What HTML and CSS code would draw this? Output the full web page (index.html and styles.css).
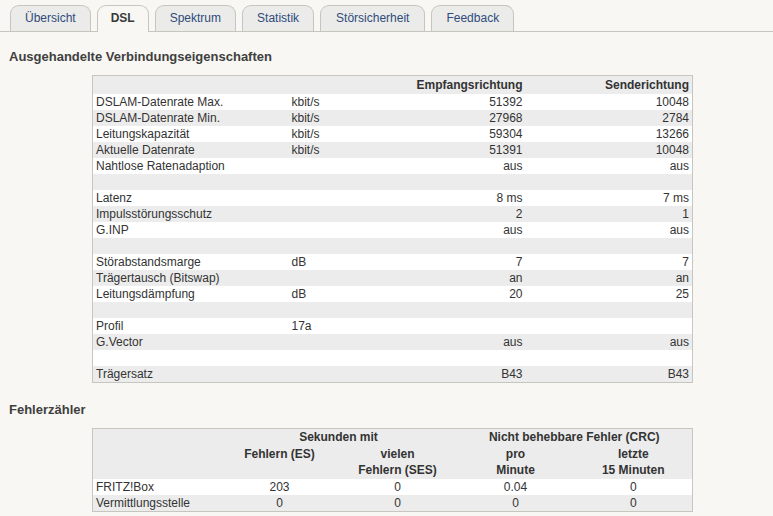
FILE: index.html
```html
<!DOCTYPE html>
<html lang="de">
<head>
<meta charset="utf-8">
<title>DSL</title>
<link rel="stylesheet" href="styles.css">
</head>
<body>
<nav class="tabs">
  <a class="tab">Übersicht</a>
  <a class="tab active">DSL</a>
  <a class="tab">Spektrum</a>
  <a class="tab">Statistik</a>
  <a class="tab wide">Störsicherheit</a>
  <a class="tab">Feedback</a>
</nav>

<h2 class="section-title first">Ausgehandelte Verbindungseigenschaften</h2>
<table class="grid props">
  <colgroup>
    <col class="c-label"><col class="c-unit"><col class="c-rx"><col class="c-tx">
  </colgroup>
  <thead>
    <tr class="head"><th></th><th></th><th class="r">Empfangsrichtung</th><th class="r">Senderichtung</th></tr>
  </thead>
  <tbody>
    <tr><td>DSLAM-Datenrate Max.</td><td>kbit/s</td><td class="r">51392</td><td class="r">10048</td></tr>
    <tr><td>DSLAM-Datenrate Min.</td><td>kbit/s</td><td class="r">27968</td><td class="r">2784</td></tr>
    <tr><td>Leitungskapazität</td><td>kbit/s</td><td class="r">59304</td><td class="r">13266</td></tr>
    <tr><td>Aktuelle Datenrate</td><td>kbit/s</td><td class="r">51391</td><td class="r">10048</td></tr>
    <tr><td>Nahtlose Ratenadaption</td><td></td><td class="r">aus</td><td class="r">aus</td></tr>
    <tr><td></td><td></td><td></td><td></td></tr>
    <tr><td>Latenz</td><td></td><td class="r">8 ms</td><td class="r">7 ms</td></tr>
    <tr><td>Impulsstörungsschutz</td><td></td><td class="r">2</td><td class="r">1</td></tr>
    <tr><td>G.INP</td><td></td><td class="r">aus</td><td class="r">aus</td></tr>
    <tr><td></td><td></td><td></td><td></td></tr>
    <tr><td>Störabstandsmarge</td><td>dB</td><td class="r">7</td><td class="r">7</td></tr>
    <tr><td>Trägertausch (Bitswap)</td><td></td><td class="r">an</td><td class="r">an</td></tr>
    <tr><td>Leitungsdämpfung</td><td>dB</td><td class="r">20</td><td class="r">25</td></tr>
    <tr><td></td><td></td><td></td><td></td></tr>
    <tr><td>Profil</td><td>17a</td><td></td><td></td></tr>
    <tr><td>G.Vector</td><td></td><td class="r">aus</td><td class="r">aus</td></tr>
    <tr><td></td><td></td><td></td><td></td></tr>
    <tr><td>Trägersatz</td><td></td><td class="r">B43</td><td class="r">B43</td></tr>
  </tbody>
</table>

<h2 class="section-title">Fehlerzähler</h2>
<table class="grid errors">
  <colgroup>
    <col class="e-label"><col class="e-val"><col class="e-val"><col class="e-val"><col class="e-val">
  </colgroup>
  <thead>
    <tr class="head"><th></th><th colspan="2" class="c">Sekunden mit</th><th colspan="2" class="c">Nicht behebbare Fehler (CRC)</th></tr>
    <tr class="head sub"><th></th><th class="c">Fehlern (ES)</th><th class="c">vielen<br>Fehlern (SES)</th><th class="c">pro<br>Minute</th><th class="c">letzte<br>15 Minuten</th></tr>
  </thead>
  <tbody>
    <tr><td>FRITZ!Box</td><td class="c">203</td><td class="c">0</td><td class="c">0.04</td><td class="c">0</td></tr>
    <tr><td>Vermittlungsstelle</td><td class="c">0</td><td class="c">0</td><td class="c">0</td><td class="c">0</td></tr>
  </tbody>
</table>
</body>
</html>
```

FILE: styles.css
```css
html, body {
  margin: 0;
  padding: 0;
  background: #f8f7f3;
}

body {
  font-family: "Liberation Sans", Arial, sans-serif;
  font-size: 12px;
  color: #3a3a3a;
}

.tabs {
  display: flex;
  gap: 6px;
  padding: 5px 0 0 10px;
  border-bottom: 1px solid #c6c6bf;
  height: 26px;
}

.tab {
  display: block;
  box-sizing: border-box;
  height: 26px;
  padding: 0 14px;
  line-height: 24px;
  background: #ebebe9;
  border: 1px solid #c6c6bf;
  border-bottom: none;
  border-radius: 9px 9px 0 0;
  color: #2f4c7c;
  white-space: nowrap;
}

.tab.wide {
  padding: 0 15px;
}

.tab.active {
  background: #f8f7f3;
  height: 27px;
  padding: 0 13px;
  font-weight: bold;
  color: #3a3a3a;
  position: relative;
  z-index: 1;
}

.section-title {
  margin: 17px 0 10px 9px;
  font-size: 13px;
  line-height: 16px;
  font-weight: bold;
  color: #3f3f3f;
}

.grid + .section-title {
  margin-top: 19px;
}

.grid {
  margin-left: 92px;
  width: 600px;
  border: 1px solid #c6c6bf;
  border-collapse: collapse;
  table-layout: fixed;
  color: #333;
}

.grid th,
.grid td {
  padding: 0 3px;
  height: 16px;
  line-height: 16px;
  text-align: left;
  white-space: nowrap;
  overflow: hidden;
}

.grid th {
  font-weight: bold;
}

.grid .r { text-align: right; }
.grid .c { text-align: center; }

.grid thead tr { background: #ececec; }
.props thead th { height: 18px; line-height: 18px; }

.grid tbody tr:nth-child(odd) { background: #ffffff; }
.grid tbody tr:nth-child(even) { background: #ececec; }

.c-label { width: 196px; }
.c-unit { width: 112px; }
.c-rx { width: 125px; }
.c-tx { width: 167px; }

.e-label { width: 128px; }
.e-val { width: 118px; }

.errors .sub th {
  vertical-align: top;
  padding-top: 1px;
  padding-bottom: 1px;
}
```
